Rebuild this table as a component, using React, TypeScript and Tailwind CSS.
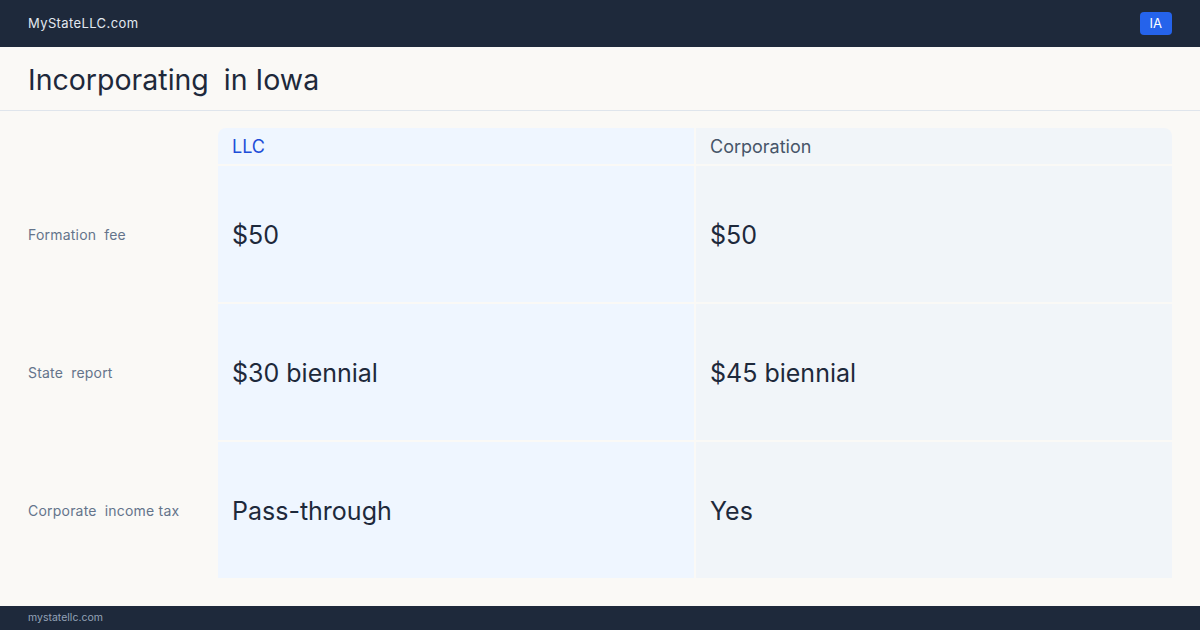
const rows = [
  { label: ["Formation", "fee"], llc: "$50", corp: "$50" },
  { label: ["State", "report"], llc: "$30 biennial", corp: "$45 biennial" },
  { label: ["Corporate", "income tax"], llc: "Pass-through", corp: "Yes" },
];

export default function App() {
  return (
    <div className="w-[1200px] h-[630px] flex flex-col bg-[#faf9f6] font-['Inter',sans-serif] overflow-hidden">
      {/* Top bar */}
      <header className="h-[47px] shrink-0 bg-[#1e293b] px-7 flex items-center justify-between">
        <span className="text-[13px] tracking-[0.03em] text-[#e2e8f0]">MyStateLLC.com</span>
        <span className="h-[23px] px-[10px] rounded bg-[#2563eb] text-white text-[13px] flex items-center">IA</span>
      </header>

      {/* Title */}
      <div className="h-[64px] shrink-0 px-7 flex items-center border-b border-[#dfe5ec]">
        <h1 className="text-[28.5px] leading-none text-[#1e293b] flex gap-[15px] pt-[4px]">
          <span>Incorporating</span>
          <span>in Iowa</span>
        </h1>
      </div>

      {/* Comparison table */}
      <main className="flex-1 px-7 pt-[17px]">
        <div className="grid grid-cols-[188px_476px_476px] grid-rows-[36px_136px_136px_136px] gap-[2px]">
          <div />
          <div className="bg-[#eff6ff] rounded-tl-lg px-[14px] flex items-center text-[18px] text-[#1d4ed8]">LLC</div>
          <div className="bg-[#f1f5f9] rounded-tr-lg px-[14px] flex items-center text-[18px] text-[#475569]">Corporation</div>
          {rows.map((r) => (
            <div key={r.llc + r.corp} className="contents">
              <div className="flex items-center gap-[8px] text-[14px] tracking-[0.015em] text-[#64748b]">
                <span>{r.label[0]}</span>
                <span>{r.label[1]}</span>
              </div>
              <div className="bg-[#eff6ff] px-[14px] pt-[3px] flex items-center text-[25px] text-[#1e293b]">{r.llc}</div>
              <div className="bg-[#f1f5f9] px-[14px] pt-[3px] flex items-center text-[25px] text-[#1e293b]">{r.corp}</div>
            </div>
          ))}
        </div>
      </main>

      {/* Footer */}
      <footer className="h-[24px] shrink-0 bg-[#1e293b] px-7 flex items-center">
        <span className="text-[10.5px] text-[#94a3b8]">mystatellc.com</span>
      </footer>
    </div>
  );
}
